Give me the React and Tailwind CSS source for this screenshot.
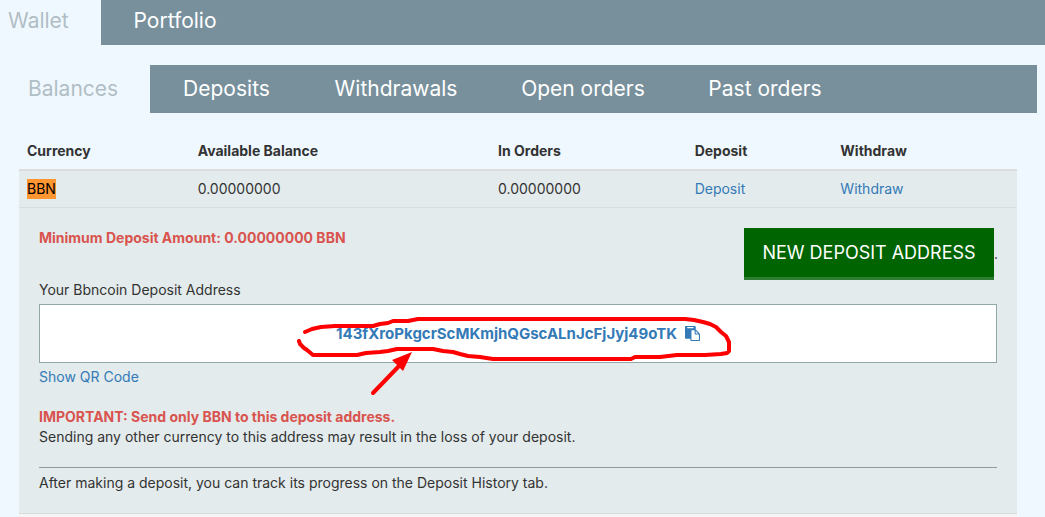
const accountTabs = [
  { label: "Wallet", width: "w-[101px] pl-2", active: true },
  { label: "Portfolio", width: "w-[148px] text-center", active: false },
];

const walletTabs = [
  { label: "Balances", width: "w-[150px] pl-7", active: true },
  { label: "Deposits", width: "w-[153px] text-center", active: false },
  { label: "Withdrawals", width: "w-[186px] text-center", active: false },
  { label: "Open orders", width: "w-[188px] text-center", active: false },
  { label: "Past orders", width: "w-[176px] text-center", active: false },
];

function TabBar({ tabs, label, size }) {
  return (
    <nav aria-label={label} className={`flex bg-[#78909c] text-[21px] ${size}`}>
      {tabs.map((tab) => (
        <a
          key={tab.label}
          href="#"
          aria-current={tab.active ? "page" : undefined}
          className={`${tab.width} shrink-0 whitespace-nowrap ${
            tab.active ? "bg-[#f0f8ff] text-[#b0bec5]" : "text-white"
          }`}
        >
          {tab.label}
        </a>
      ))}
    </nav>
  );
}

function PasteIcon() {
  return (
    <svg viewBox="0 0 1792 1792" className="size-[15px]" fill="currentColor" aria-hidden="true">
      <path d="M768 1664h896v-640h-416q-40 0-68-28t-28-68v-416h-384v1152zm256-1440v-64q0-13-9.500-22.500t-22.500-9.500h-704q-13 0-22.500 9.500t-9.500 22.500v64q0 13 9.500 22.500t22.500 9.500h704q13 0 22.500-9.500t9.500-22.500zm256 672h299l-299-299v299zm512 128v672q0 40-28 68t-68 28h-960q-40 0-68-28t-28-68v-160h-544q-40 0-68-28t-28-68v-1344q0-40 28-68t68-28h1088q40 0 68 28t28 68v328q21 13 36 28l408 408q28 28 48 76t20 88z" />
    </svg>
  );
}

function AddressMarker() {
  return (
    <svg
      viewBox="294 310 448 90"
      className="pointer-events-none absolute left-1/2 top-[5px] h-[90px] w-[448px] -translate-x-1/2"
      fill="none"
      stroke="#ff0000"
      strokeWidth="4"
      strokeLinecap="round"
      strokeLinejoin="round"
      aria-hidden="true"
    >
      <path d="M305 332 L312 329 L321 327 L335 326 H373 L380 324 L388 323 L393 321 H408 L418 319 H685 L694 320 L703 322 L710 324 L716 327 L721 332 L726 336 L729 342 V351 L727 353 L721 354 L705 355 L677 355 L660 357 L635 357 L631 359 H493 L480 357 L468 356 L460 354 L453 352 L443 351 L433 349 H397 L388 351 L380 352 L366 353 L357 355 H313 L307 350 L304 348 L300 344 L299 341" />
      <path d="M373 393 L399 366" />
      <path d="M412 352 L392 360 L403 371 Z" fill="#ff0000" stroke="none" />
    </svg>
  );
}

export default function App() {
  return (
    <div className="min-h-screen bg-[#f0f8ff] font-[Inter,sans-serif] text-sm leading-5 text-[#333]">
      <TabBar tabs={accountTabs} label="Account" size="leading-[42px] *:pb-[3px]" />
      <main className="pr-2 pt-5">
        <TabBar tabs={walletTabs} label="Wallet" size="leading-[48px]" />
        <div className="pl-[19px] pr-5 pt-5">
          <table className="w-full table-fixed border-collapse bg-[#e3ebec] text-left">
            <colgroup>
              <col className="w-[17.1%]" />
              <col className="w-[30.1%]" />
              <col className="w-[19.7%]" />
              <col className="w-[14.6%]" />
              <col />
            </colgroup>
            <thead className="bg-[#f0f8ff]">
              <tr className="border-b-2 border-[#dddddd] *:p-2 *:font-bold">
                <th scope="col">Currency</th>
                <th scope="col">Available Balance</th>
                <th scope="col">In Orders</th>
                <th scope="col">Deposit</th>
                <th scope="col">Withdraw</th>
              </tr>
            </thead>
            <tbody>
              <tr className="border-b border-[#d8dfe0] *:p-2">
                <td>
                  <mark className="inline-block bg-[#ff9632] text-black">BBN</mark>
                </td>
                <td>0.00000000</td>
                <td>0.00000000</td>
                <td>
                  <a href="#" className="text-[#337ab7]">Deposit</a>
                </td>
                <td>
                  <a href="#" className="text-[#337ab7]">Withdraw</a>
                </td>
              </tr>
              <tr className="border-b border-[#d8dadb]">
                <td colSpan={5} className="px-5 pb-5 pt-5">
                  <div className="flex items-start justify-between">
                    <p className="font-bold text-[#d9534f]">Minimum Deposit Amount: 0.00000000 BBN</p>
                    <div className="flex items-center">
                      <button
                        type="button"
                        className="h-[52px] w-[250px] whitespace-nowrap border-b-[3px] border-[#2e7d32] bg-[#006400] text-lg text-white"
                      >
                        NEW DEPOSIT ADDRESS
                      </button>
                      <span className="w-[3px]">.</span>
                    </div>
                  </div>
                  <p className="pb-1">Your Bbncoin Deposit Address</p>
                  <div className="relative flex h-[59px] items-center justify-center border border-[#90a8a8] bg-white">
                    <a href="#" className="flex items-center gap-2 text-[15px] font-bold text-[#337ab7]">
                      143fXroPkgcrScMKmjhQGscALnJcFjJyj49oTK
                      <PasteIcon />
                    </a>
                    <AddressMarker />
                  </div>
                  <a href="#" className="mt-1 inline-block text-[#337ab7]">Show QR Code</a>
                  <p className="mt-5 font-bold text-[#d9534f]">
                    IMPORTANT: Send only BBN to this deposit address.
                  </p>
                  <p>Sending any other currency to this address may result in the loss of your deposit.</p>
                  <hr className="mb-[5px] mt-5 border-[#90999c]" />
                  <p>After making a deposit, you can track its progress on the Deposit History tab.</p>
                </td>
              </tr>
            </tbody>
          </table>
          <div className="h-1 bg-[#f5f5f5]" />
        </div>
      </main>
    </div>
  );
}
